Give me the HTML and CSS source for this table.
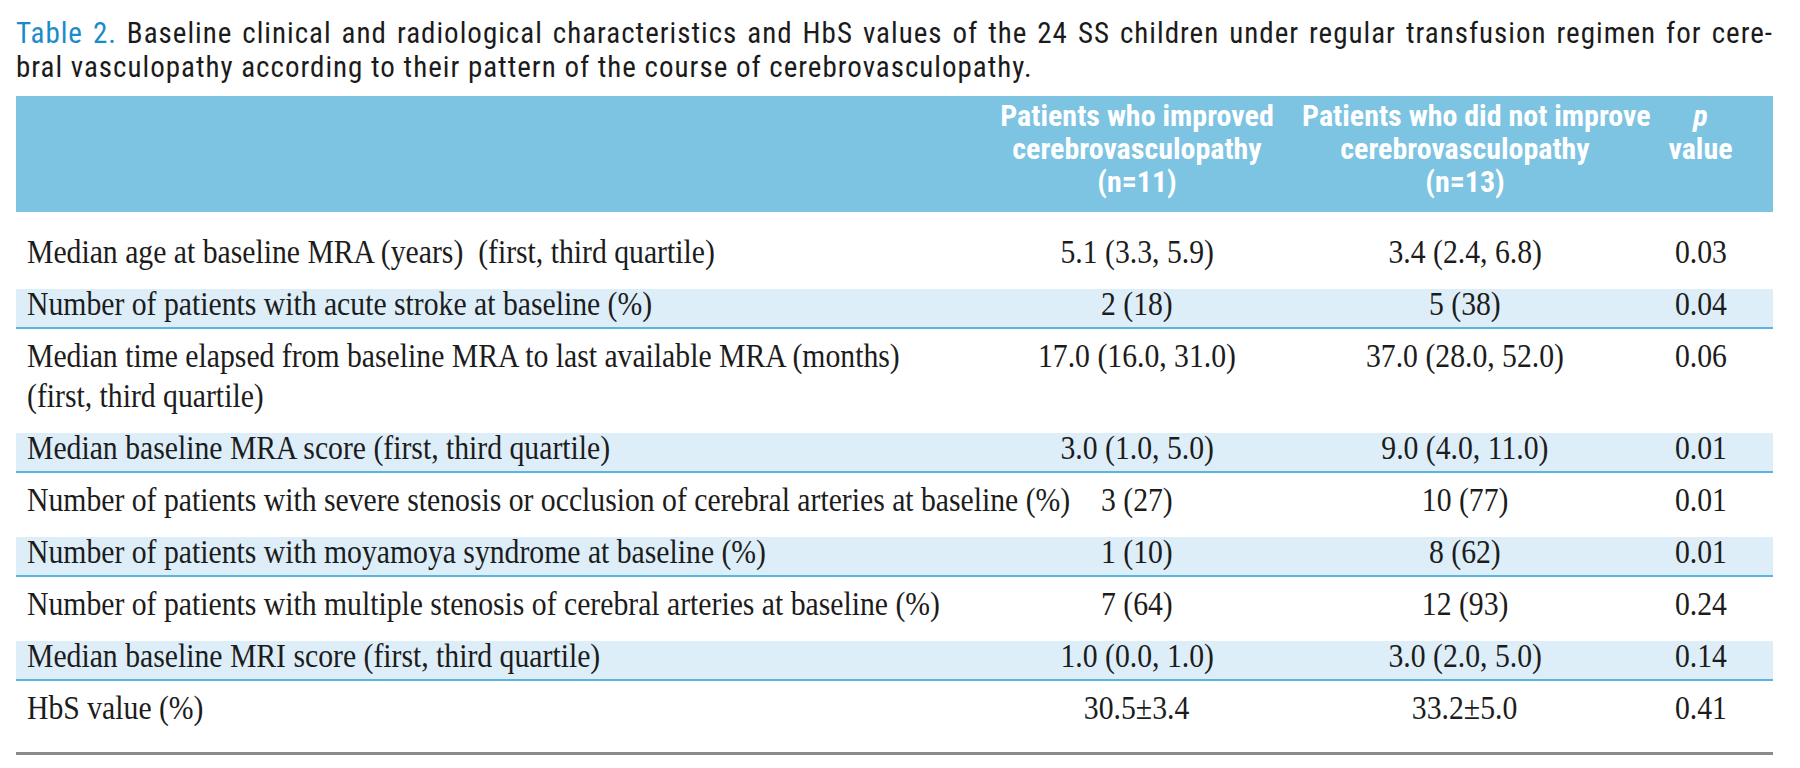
FILE: index.html
```html
<!DOCTYPE html>
<html lang="en">
<head>
<meta charset="utf-8">
<title>Table 2</title>
<link rel="stylesheet" href="styles.css">
</head>
<body>
<div class="page">
  <p class="caption">
    <span class="cap-line cap-first"><span class="cap-label">Table 2.</span> Baseline clinical and radiological characteristics and HbS values of the 24 SS children under regular transfusion regimen for cere-</span>
    <span class="cap-line">bral vasculopathy according to their pattern of the course of cerebrovasculopathy.</span>
  </p>
  <table class="data">
    <colgroup>
      <col class="c-label">
      <col class="c-imp">
      <col class="c-not">
      <col class="c-p">
    </colgroup>
    <thead>
      <tr>
        <th></th>
        <th>Patients who improved<br>cerebrovasculopathy<br>(n=11)</th>
        <th>Patients who did not improve<br>cerebrovasculopathy<br>(n=13)</th>
        <th><i>p</i><br>value</th>
      </tr>
    </thead>
    <tbody>
      <tr class="first">
        <td class="label"><span class="tx">Median age at baseline MRA (years) &nbsp;(first, third quartile)</span></td>
        <td><span class="tx">5.1 (3.3, 5.9)</span></td>
        <td><span class="tx">3.4 (2.4, 6.8)</span></td>
        <td><span class="tx">0.03</span></td>
      </tr>
      <tr class="shaded">
        <td class="label"><span class="tx">Number of patients with acute stroke at baseline (%)</span></td>
        <td><span class="tx">2 (18)</span></td>
        <td><span class="tx">5 (38)</span></td>
        <td><span class="tx">0.04</span></td>
      </tr>
      <tr>
        <td class="label"><span class="tx">Median time elapsed from baseline MRA to last available MRA (months)<span class="wrap">(first, third quartile)</span></span></td>
        <td><span class="tx">17.0 (16.0, 31.0)</span></td>
        <td><span class="tx">37.0 (28.0, 52.0)</span></td>
        <td><span class="tx">0.06</span></td>
      </tr>
      <tr class="shaded">
        <td class="label"><span class="tx">Median baseline MRA score (first, third quartile)</span></td>
        <td><span class="tx">3.0 (1.0, 5.0)</span></td>
        <td><span class="tx">9.0 (4.0, 11.0)</span></td>
        <td><span class="tx">0.01</span></td>
      </tr>
      <tr>
        <td class="label"><span class="tx">Number of patients with severe stenosis or occlusion of cerebral arteries at baseline (%)</span></td>
        <td><span class="tx">3 (27)</span></td>
        <td><span class="tx">10 (77)</span></td>
        <td><span class="tx">0.01</span></td>
      </tr>
      <tr class="shaded">
        <td class="label"><span class="tx">Number of patients with moyamoya syndrome at baseline (%)</span></td>
        <td><span class="tx">1 (10)</span></td>
        <td><span class="tx">8 (62)</span></td>
        <td><span class="tx">0.01</span></td>
      </tr>
      <tr>
        <td class="label"><span class="tx">Number of patients with multiple stenosis of cerebral arteries at baseline (%)</span></td>
        <td><span class="tx">7 (64)</span></td>
        <td><span class="tx">12 (93)</span></td>
        <td><span class="tx">0.24</span></td>
      </tr>
      <tr class="shaded">
        <td class="label"><span class="tx">Median baseline MRI score (first, third quartile)</span></td>
        <td><span class="tx">1.0 (0.0, 1.0)</span></td>
        <td><span class="tx">3.0 (2.0, 5.0)</span></td>
        <td><span class="tx">0.14</span></td>
      </tr>
      <tr class="last">
        <td class="label"><span class="tx">HbS value (%)</span></td>
        <td><span class="tx">30.5±3.4</span></td>
        <td><span class="tx">33.2±5.0</span></td>
        <td><span class="tx">0.41</span></td>
      </tr>
    </tbody>
  </table>
</div>
</body>
</html>
```

FILE: styles.css
```css
html, body {
  margin: 0;
  padding: 0;
  background: #ffffff;
}

.page {
  padding: 16px 27px 0 16px;
}

.caption {
  margin: 0;
  font-family: "Roboto", sans-serif;
  font-stretch: 75%;
  font-size: 29px;
  line-height: 34px;
  letter-spacing: 1px;
  color: #1b1b1b;
}

.cap-line {
  display: block;
  white-space: nowrap;
}

.cap-first {
  text-align: justify;
  text-align-last: justify;
}

.cap-label {
  color: #1a8bca;
}

.data {
  margin-top: 0;
  width: 100%;
  border-collapse: separate;
  border-spacing: 0 12px;
  table-layout: fixed;
  font-family: "Liberation Serif", "Times New Roman", serif;
  font-size: 33px;
  color: #1c1c1c;
  border-bottom: 3px solid #8a8a8a;
}

.c-label { width: 956px; }
.c-imp { width: 330px; }
.c-not { width: 326px; }
.c-p { width: 145px; }

.data thead tr {
  background: #7dc3e2;
}

.data th {
  font-family: "Roboto", sans-serif;
  font-stretch: 75%;
  font-weight: bold;
  font-size: 30px;
  line-height: 33px;
  color: #ffffff;
  text-align: center;
  vertical-align: top;
  padding: 3px 0 14px;
  white-space: nowrap;
}

.data td {
  line-height: 30px;
  padding: 0 0 8px;
  text-align: center;
  vertical-align: top;
  white-space: nowrap;
  border-bottom: 2px solid transparent;
}

.tx {
  display: inline-block;
  transform: scaleX(0.9);
  transform-origin: 50% 50%;
}

.data td.label {
  text-align: left;
  padding-left: 11px;
}

.data td.label .tx {
  transform-origin: 0 50%;
}

.wrap {
  display: block;
  margin-top: 10px;
}

.data tr.first td {
  padding-top: 13px;
}

.data tr.shaded td {
  background: #ddeef9;
  border-bottom-color: #58b6dc;
}

.data tr.last td {
  padding-bottom: 15px;
}
```
